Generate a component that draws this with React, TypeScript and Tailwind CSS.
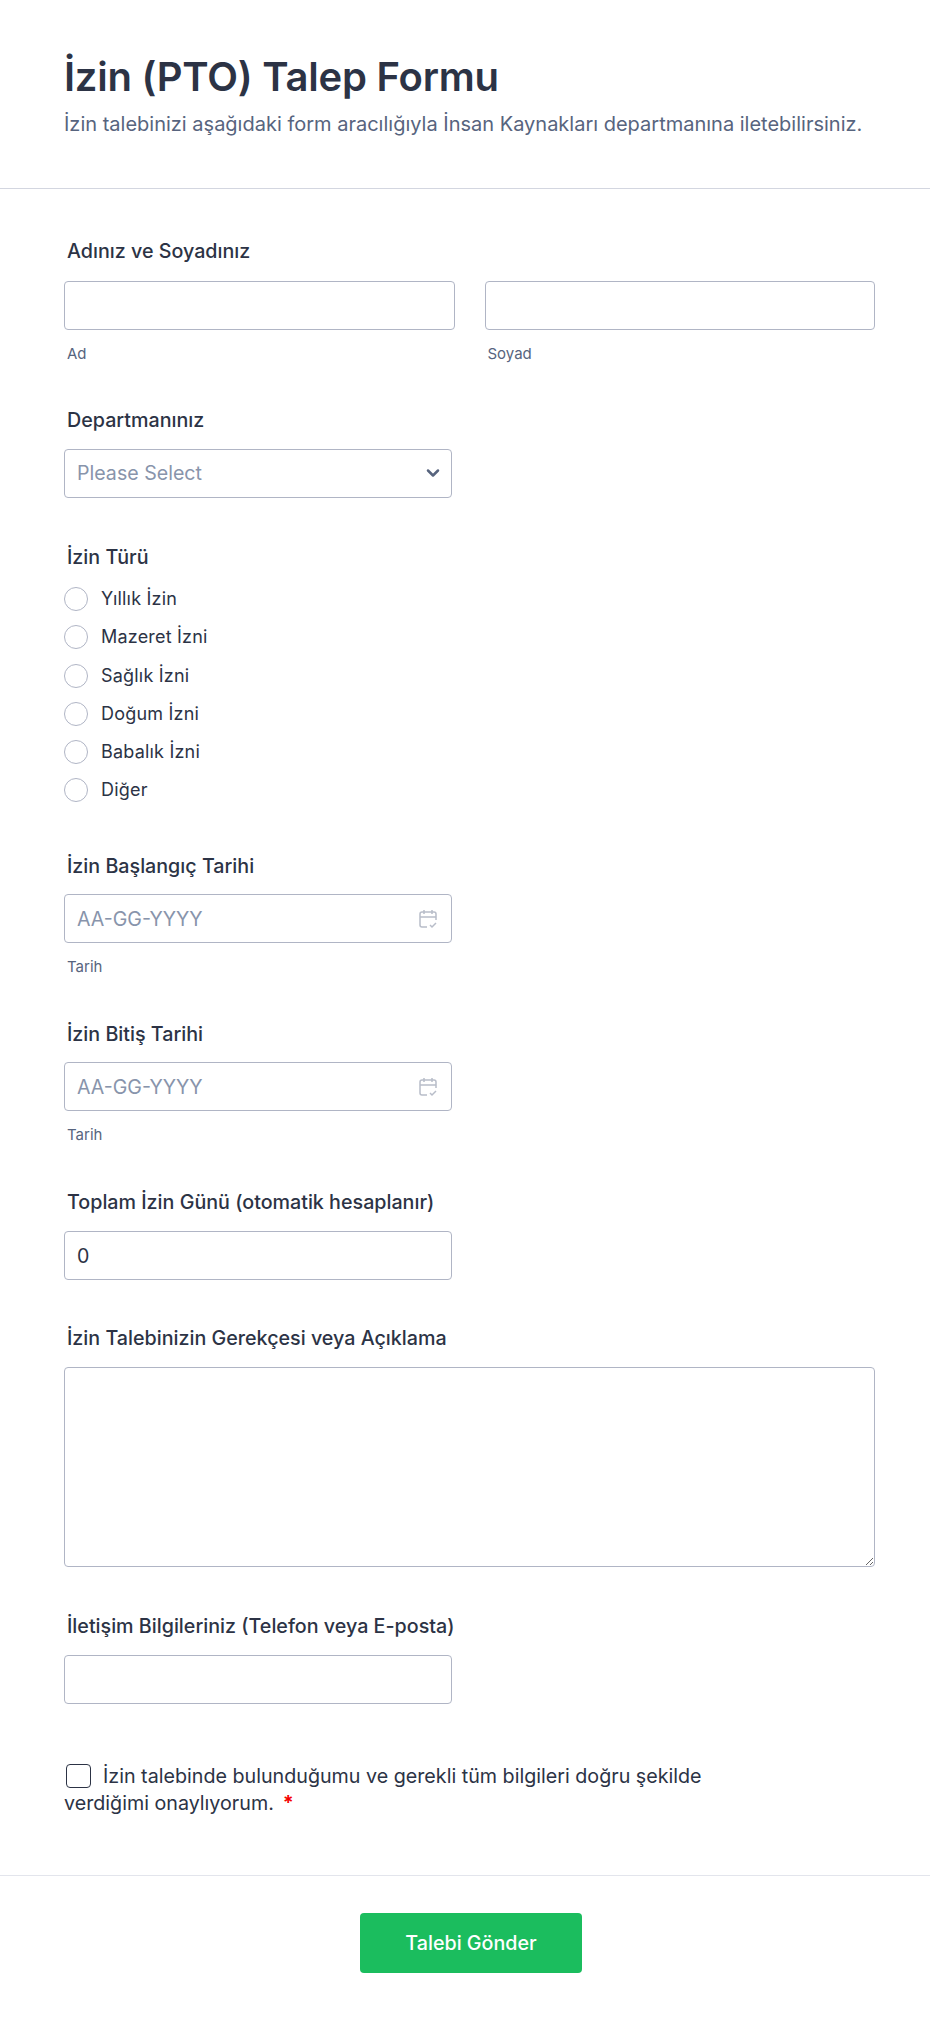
import { ChevronDown } from 'lucide-react'

const font = { fontFamily: 'Inter, sans-serif' }

const leaveTypes = ['Yıllık İzin', 'Mazeret İzni', 'Sağlık İzni', 'Doğum İzni', 'Babalık İzni', 'Diğer']

const inputClass =
  'block h-[49px] rounded-[4px] border border-[#b0b5c5] bg-white px-3 text-[19.6px] text-[#2c3345] outline-none placeholder:text-[#8894ab]'

function Label({ children }: { children: React.ReactNode }) {
  return <div className="pl-[3px] text-[19.7px] leading-7 font-medium text-[#2c3345]">{children}</div>
}

function SubLabel({ children }: { children: React.ReactNode }) {
  return <div className="mt-[15px] pl-[3px] text-[15px] leading-[18px] text-[#57647e]">{children}</div>
}

function DateField({ label }: { label: string }) {
  return (
    <div>
      <Label>{label}</Label>
      <div className="relative mt-[14px] w-[388px]">
        <input className={`${inputClass} w-full`} placeholder="AA-GG-YYYY" />
        <svg className="absolute top-[15px] right-[14px] h-5 w-5 text-[#b8bdc9]" viewBox="0 0 20 20" fill="none" stroke="currentColor" strokeWidth="1.5">
          <path d="M9 18H4a2 2 0 0 1-2-2V5a2 2 0 0 1 2-2h12a2 2 0 0 1 2 2v6" />
          <path d="M2 8h16M6 1v4M14 1v4" />
          <path d="M12 16l2 2 4-4" />
        </svg>
      </div>
      <SubLabel>Tarih</SubLabel>
    </div>
  )
}

export default function App() {
  return (
    <div className="min-h-[2022px] bg-white" style={font}>
      <header className="h-[189px] border-b border-[#d3d6e0] px-16 pt-[51px]">
        <h1 className="text-[40px] leading-[52px] font-semibold tracking-[-0.23px] text-[#2c3345]">İzin (PTO) Talep Formu</h1>
        <p className="mt-[7px] text-xl leading-7 text-[#57647e]">
          İzin talebinizi aşağıdaki form aracılığıyla İnsan Kaynakları departmanına iletebilirsiniz.
        </p>
      </header>

      <main className="pt-[48px] pr-[55px] pl-16">
        <section>
          <Label>Adınız ve Soyadınız</Label>
          <div className="mt-4 grid grid-cols-2 gap-[30px]">
            <div>
              <input className={`${inputClass} w-full`} />
              <SubLabel>Ad</SubLabel>
            </div>
            <div>
              <input className={`${inputClass} w-full`} />
              <SubLabel>Soyad</SubLabel>
            </div>
          </div>
        </section>

        <section className="mt-[43px]">
          <Label>Departmanınız</Label>
          <div className="relative mt-[15px] w-[388px]">
            <div className={`${inputClass} flex w-full items-center text-[#8894ab]`}>Please Select</div>
            <ChevronDown className="absolute top-[14px] right-[9px] h-5 w-5 text-[#57647e]" strokeWidth={3} />
          </div>
        </section>

        <section className="mt-[45px]">
          <Label>İzin Türü</Label>
          <ul className="mt-4 flex flex-col gap-[14.3px]">
            {leaveTypes.map((type) => (
              <li key={type} className="flex h-6 items-center gap-[13px] text-lg tracking-[0.2px] text-[#2c3345]">
                <span className="h-6 w-6 rounded-full border border-[#b0b5c5]" />
                {type}
              </li>
            ))}
          </ul>
        </section>

        <div className="mt-[50px]">
          <DateField label="İzin Başlangıç Tarihi" />
        </div>
        <div className="mt-[44px]">
          <DateField label="İzin Bitiş Tarihi" />
        </div>

        <section className="mt-[44px]">
          <Label>Toplam İzin Günü (otomatik hesaplanır)</Label>
          <input className={`${inputClass} mt-[15px] w-[388px]`} defaultValue="0" />
        </section>

        <section className="mt-[44px]">
          <Label>İzin Talebinizin Gerekçesi veya Açıklama</Label>
          <textarea className="mt-[15px] block h-[200px] w-[811px] rounded-[4px] border border-[#b0b5c5] bg-white outline-none" />
        </section>

        <section className="mt-[45px]">
          <Label>İletişim Bilgileriniz (Telefon veya E-posta)</Label>
          <input className={`${inputClass} mt-[15px] w-[388px]`} />
        </section>

        <section className="mt-[59px] w-[660px] text-[19.7px] leading-[27px] text-[#2c3345]">
          <span className="mr-3 ml-[2px] inline-block h-6 w-[25px] rounded-[4px] border-[1.5px] border-[#2c3345] align-[-5px]" />
          İzin talebinde bulunduğumu ve gerekli tüm bilgileri doğru şekilde verdiğimi onaylıyorum.
          <span className="ml-[9px] font-bold text-[#f50000]">*</span>
        </section>
      </main>

      <footer className="mt-[58px] flex justify-center border-t border-[#e3e5ec] pt-[37px] pl-3">
        <button className="h-[60px] w-[222px] rounded-[4px] bg-[#1bbd5e] text-[19.7px] font-medium text-white">Talebi Gönder</button>
      </footer>
    </div>
  )
}
